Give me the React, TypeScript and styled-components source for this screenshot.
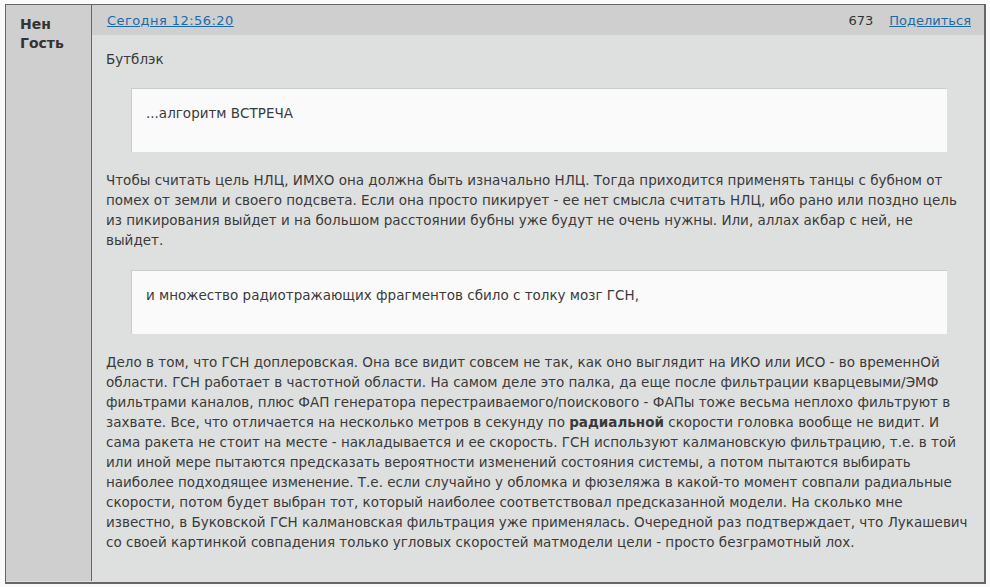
import React from 'react';
import styled, { createGlobalStyle } from 'styled-components';

const GlobalStyle = createGlobalStyle`
  html, body {
    margin: 0;
    padding: 0;
    background: #fafafa;
  }
  body {
    font-family: 'DejaVu Sans', Verdana, sans-serif;
    font-size: 13px;
    color: #333;
  }
`;

const Page = styled.div`
  width: 990px;
  height: 587px;
  padding: 4px 4px 3px 5px;
  box-sizing: border-box;
`;

const Post = styled.article`
  display: flex;
  height: 580px;
  box-sizing: border-box;
  border: 1px solid #666;
  border-bottom-width: 2px;
  border-right-width: 2px;
  background: #dee0df;
`;

const Author = styled.aside`
  flex: none;
  width: 71px;
  padding: 10px 0 0 14px;
  margin-bottom: 1px;
  background: #cfcfcf;
  border-right: 1px solid #666;
  font-weight: bold;
  font-size: 14px;
  line-height: 19px;
`;

const Main = styled.div`
  flex: 1;
  min-width: 0;
`;

const Header = styled.header`
  display: flex;
  align-items: center;
  justify-content: space-between;
  height: 30px;
  padding: 0 13px 0 15px;
  background: #cfcfcf;
`;

const HeaderLink = styled.a<{ $spacing?: number }>`
  color: #1a6bab;
  text-decoration: underline;
  letter-spacing: ${(p) => p.$spacing ?? 0}px;
`;

const Meta = styled.div`
  display: flex;
  gap: 16px;
`;

const Content = styled.div`
  padding: 14px 37px 0 14px;
  font-size: 13.5px;
  color: #3a3a3a;
`;

const Paragraph = styled.p<{ $after?: number }>`
  margin: 0 0 ${(p) => p.$after ?? 0}px;
  line-height: 20px;
  white-space: nowrap;
`;

const Quote = styled.blockquote`
  margin: 19px 0 18px 25px;
  height: 64px;
  box-sizing: border-box;
  padding: 14px 14px 0;
  line-height: 20px;
  background: #fafafa;
  border-top: 1px solid #ccc;
  border-left: 1px solid #ccc;
`;

const FirstLines = [
  'Чтобы считать цель НЛЦ, ИМХО она должна быть изначально НЛЦ. Тогда приходится применять танцы с бубном от',
  'помех от земли и своего подсвета. Если она просто пикирует - ее нет смысла считать НЛЦ, ибо рано или поздно цель',
  'из пикирования выйдет и на большом расстоянии бубны уже будут не очень нужны. Или, аллах акбар с ней, не',
  'выйдет.',
];

const App = () => (
  <Page>
    <GlobalStyle />
    <Post>
      <Author>
        Нен
        <br />
        Гость
      </Author>
      <Main>
        <Header>
          <HeaderLink href="#" $spacing={0.44}>Сегодня 12:56:20</HeaderLink>
          <Meta>
            <span>673</span>
            <HeaderLink href="#">Поделиться</HeaderLink>
          </Meta>
        </Header>
        <Content>
          <Paragraph>Бутблэк</Paragraph>
          <Quote>...алгоритм ВСТРЕЧА</Quote>
          <Paragraph $after={20}>
            {FirstLines.map((line) => (
              <React.Fragment key={line}>
                {line}
                <br />
              </React.Fragment>
            ))}
          </Paragraph>
          <Quote>и множество радиотражающих фрагментов сбило с толку мозг ГСН,</Quote>
          <Paragraph>
            Дело в том, что ГСН доплеровская. Она все видит совсем не так, как оно выглядит на ИКО или ИСО - во временнОй
            <br />
            области. ГСН работает в частотной области. На самом деле это палка, да еще после фильтрации кварцевыми/ЭМФ
            <br />
            фильтрами каналов, плюс ФАП генератора перестраиваемого/поискового - ФАПы тоже весьма неплохо фильтруют в
            <br />
            захвате. Все, что отличается на несколько метров в секунду по <b>радиальной</b> скорости головка вообще не видит. И
            <br />
            сама ракета не стоит на месте - накладывается и ее скорость. ГСН используют калмановскую фильтрацию, т.е. в той
            <br />
            или иной мере пытаются предсказать вероятности изменений состояния системы, а потом пытаются выбирать
            <br />
            наиболее подходящее изменение. Т.е. если случайно у обломка и фюзеляжа в какой-то момент совпали радиальные
            <br />
            скорости, потом будет выбран тот, который наиболее соответствовал предсказанной модели. На сколько мне
            <br />
            известно, в Буковской ГСН калмановская фильтрация уже применялась. Очередной раз подтверждает, что Лукашевич
            <br />
            со своей картинкой совпадения только угловых скоростей матмодели цели - просто безграмотный лох.
          </Paragraph>
        </Content>
      </Main>
    </Post>
  </Page>
);

export default App;
